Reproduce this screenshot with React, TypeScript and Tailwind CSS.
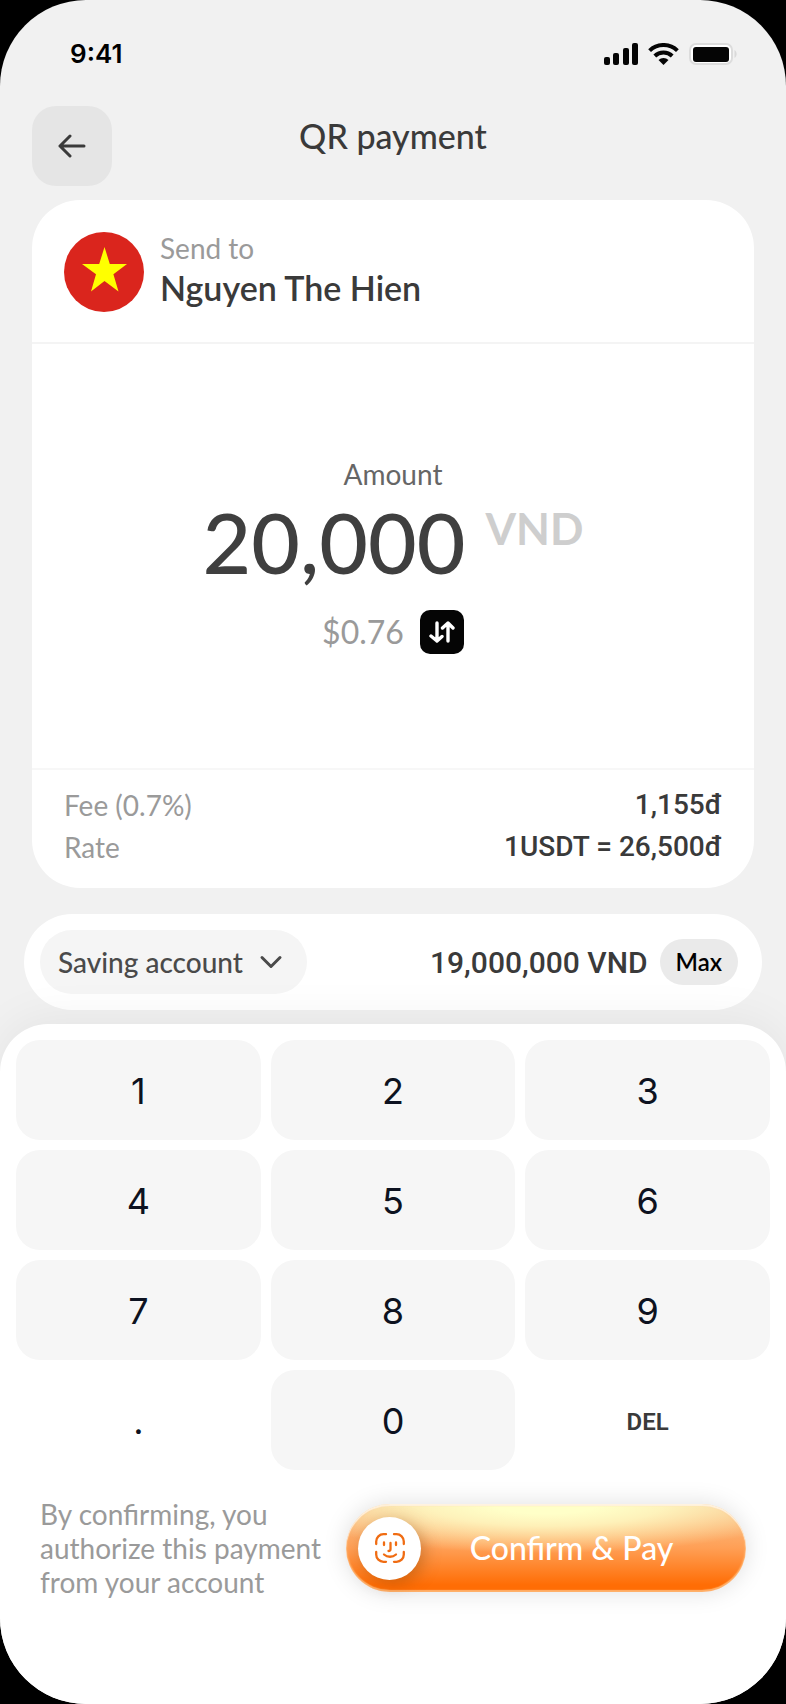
import { ChevronDown } from "lucide-react";

const keys = ["1", "2", "3", "4", "5", "6", "7", "8", "9", ".", "0", "DEL"];

const details = [
  { label: "Fee (0.7%)", value: "1,155đ" },
  { label: "Rate", value: "1USDT = 26,500đ" }
];

function StatusBar() {
  return (
    <div className="flex h-[106px] items-center justify-between pl-[70px] pr-[49px] pt-0.5">
      <p className="font-['Inter',sans-serif] text-[26px] font-semibold leading-8 text-black">9:41</p>
      <div className="flex items-center gap-[10px]" aria-hidden="true">
        <svg className="h-[22px] w-[34px]" viewBox="0 0 34 22" fill="#050505">
          <rect x="0" y="14" width="6" height="8" rx="2" />
          <rect x="9" y="10" width="6" height="12" rx="2" />
          <rect x="19" y="5" width="6" height="17" rx="2" />
          <rect x="28" y="0" width="6" height="22" rx="2" />
        </svg>
        <svg className="h-[22px] w-[31px]" viewBox="0 0 31 22" fill="none" stroke="#050505" strokeWidth="4">
          <path d="M1.6 7.6a20 20 0 0 1 27.8 0" />
          <path d="M6.8 13a12.5 12.5 0 0 1 17.4 0" />
          <path d="M15.500 22l-5-5a7.300 7.300 0 0 1 10 0z" fill="#050505" stroke="none" />
        </svg>
        <svg className="h-[22px] w-12" viewBox="0 0 48 22">
          <rect x="1" y="1" width="42" height="20" rx="6" fill="#fff" stroke="#dcdcdc" strokeWidth="2" />
          <rect x="4" y="4" width="36" height="15" rx="3" fill="#050505" />
          <path d="M45.500 7v8c2.800-1.500 2.800-6.500 0-8z" fill="#d9d9d9" />
        </svg>
      </div>
    </div>
  );
}

function BackIcon() {
  return (
    <svg
      className="h-6 w-7"
      viewBox="0 0 28 24"
      fill="none"
      stroke="currentColor"
      strokeWidth="3"
      strokeLinecap="round"
      strokeLinejoin="round"
      aria-hidden="true"
    >
      <path d="M26 12H2M12 2L2 12l10 10" />
    </svg>
  );
}

function SwapIcon() {
  return (
    <svg
      className="h-[22px] w-[26px]"
      viewBox="0 0 26 22"
      fill="none"
      stroke="#fff"
      strokeWidth="3.4"
      strokeLinecap="round"
      strokeLinejoin="round"
      aria-hidden="true"
    >
      <path d="M8 2v18l-6-5M8 20l5-4.500M19 20V2l-5.500 5M19 2l5 5" />
    </svg>
  );
}

function FaceIcon() {
  return (
    <svg
      className="h-[30px] w-[30px]"
      viewBox="0 0 30 30"
      fill="none"
      stroke="#f06c12"
      strokeWidth="2.3"
      strokeLinecap="round"
      aria-hidden="true"
    >
      <path d="M1.200 11V8.500a7.300 7.300 0 0 1 7.300-7.300H11M19 1.200h2.500a7.300 7.300 0 0 1 7.300 7.300V11M28.800 19v2.500a7.300 7.300 0 0 1-7.300 7.300H19M11 28.800H8.500a7.300 7.300 0 0 1-7.300-7.300V19" />
      <path d="M9 9.500v2.500M21 9.500v2.500M15.500 10v6a2 2 0 0 1-2 2M9 21.500c3.500 3 8.500 3 12 0" />
    </svg>
  );
}

export default function App() {
  return (
    <div className="bg-black font-['Lato',sans-serif]">
      <main className="flex min-h-screen flex-col overflow-hidden rounded-[86px] bg-[#f1f1f1] text-[#3a3a3a]">
        <StatusBar />

        <header className="grid grid-cols-[80px_1fr_80px] px-8">
          <button
            type="button"
            aria-label="Back"
            className="flex h-20 w-20 items-center justify-center rounded-3xl bg-[#e5e5e5]"
          >
            <BackIcon />
          </button>
          <h1 className="pt-2.5 text-center text-[34px] font-medium leading-10">QR payment</h1>
        </header>

        <section className="mx-8 mt-3.5 rounded-[48px] bg-white">
          <div className="flex h-36 items-center gap-4 border-b-2 border-[#f4f4f4] px-8 pt-0.5">
            <svg className="h-20 w-20" viewBox="0 0 80 80" role="img" aria-label="Vietnam">
              <circle cx="40" cy="40" r="40" fill="#da251d" />
              <path
                d="M40.500 15l5.300 17H63L49.400 42.300 54.500 59.500 40.500 49 27 59.500 32 42.300 18 32h17.200z"
                fill="#ff0"
              />
            </svg>
            <div>
              <p className="text-[28px] leading-8 text-[#9a9a9a]">Send to</p>
              <p className="text-[34px] font-semibold leading-[48px]">Nguyen The Hien</p>
            </div>
          </div>

          <div className="flex h-[426px] flex-col items-center justify-center border-b-2 border-[#f7f7f7]">
            <p className="text-[28px] leading-8 text-[#666]">Amount</p>
            <p className="mt-2 flex items-start gap-5 text-[#3f3f3f]">
              <span className="text-[84px] font-medium leading-[88px]">20,000</span>
              <span className="text-[44px] font-bold leading-[60px] text-[#cecece]">VND</span>
            </p>
            <div className="mt-6 flex items-center gap-4">
              <p className="text-[32px] leading-10 text-[#9a9a9a]">$0.76</p>
              <button
                type="button"
                aria-label="Swap currency"
                className="flex h-11 w-11 items-center justify-center rounded-[10px] bg-[#050505]"
              >
                <SwapIcon />
              </button>
            </div>
          </div>

          <dl className="px-8 pb-5 pt-3.5">
            {details.map((item) => (
              <div key={item.label} className="flex justify-between text-[28px] leading-[42px]">
                <dt className="text-[#9a9a9a]">{item.label}</dt>
                <dd className="font-['Roboto',sans-serif] font-medium">{item.value}</dd>
              </div>
            ))}
          </dl>
        </section>

        <section className="mx-6 mt-[26px] flex h-24 items-center justify-between rounded-full bg-white pl-4 pr-6">
          <button
            type="button"
            className="flex h-16 items-center gap-2.5 rounded-full bg-[#f5f5f5] px-[18px] text-[28px] font-medium text-[#4a4a4a]"
          >
            Saving account
            <ChevronDown className="h-9 w-9" strokeWidth={2} aria-hidden="true" />
          </button>
          <div className="flex items-center gap-3">
            <p className="font-['Roboto',sans-serif] text-[30px] font-medium">19,000,000 VND</p>
            <button
              type="button"
              className="h-[46px] rounded-full bg-[#eaeaea] px-4 text-2xl font-semibold text-black"
            >
              Max
            </button>
          </div>
        </section>

        <section className="mt-3.5 flex-1 rounded-t-[48px] bg-white px-4 pb-10 pt-4 shadow-[0_-4px_48px_rgba(0,0,0,0.06)]">
          <div className="grid grid-cols-3 gap-[10px]">
            {keys.map((key) =>
              key === "DEL" ? (
                <button
                  key={key}
                  type="button"
                  className="h-[100px] pt-1 font-['Roboto',sans-serif] text-2xl font-semibold text-[#3a3a3a]"
                >
                  DEL
                </button>
              ) : (
                <button
                  key={key}
                  type="button"
                  className={`h-[100px] rounded-3xl pt-0.5 font-['Inter',sans-serif] text-4xl text-[#0d1220] ${
                    key === "." ? "" : "bg-[#f6f6f6]"
                  }`}
                >
                  {key}
                </button>
              )
            )}
          </div>

          <div className="mt-[27px] flex items-center justify-between px-6">
            <p className="text-[28px] leading-[34px] text-[#9a9a9a]">
              By confirming, you
              <br />
              authorize this payment
              <br />
              from your account
            </p>
            <button
              type="button"
              className="flex h-[88px] w-[400px] items-center rounded-full bg-[radial-gradient(ellipse_66%_56%_at_50%_0%,#ffffc8_20%,#ffffc8cc_45%,#ffffc800_100%),linear-gradient(to_bottom,#f8c894,#ff9f55_50%,#ff6d05_92%)] pl-3 shadow-[inset_0_2px_1px_#fff3e0,inset_0_-2px_1px_#ffb069,inset_0_0_2px_1px_#ffb069,0_0_24px_rgba(0,0,0,0.13)]"
            >
              <span className="flex h-[63px] w-[63px] items-center justify-center rounded-full bg-white shadow-[4px_4px_16px_rgba(120,60,0,0.35)]">
                <FaceIcon />
              </span>
              <span className="flex-1 pr-6 text-center text-[32px] font-medium text-white">Confirm &amp; Pay</span>
            </button>
          </div>
        </section>
      </main>
    </div>
  );
}
